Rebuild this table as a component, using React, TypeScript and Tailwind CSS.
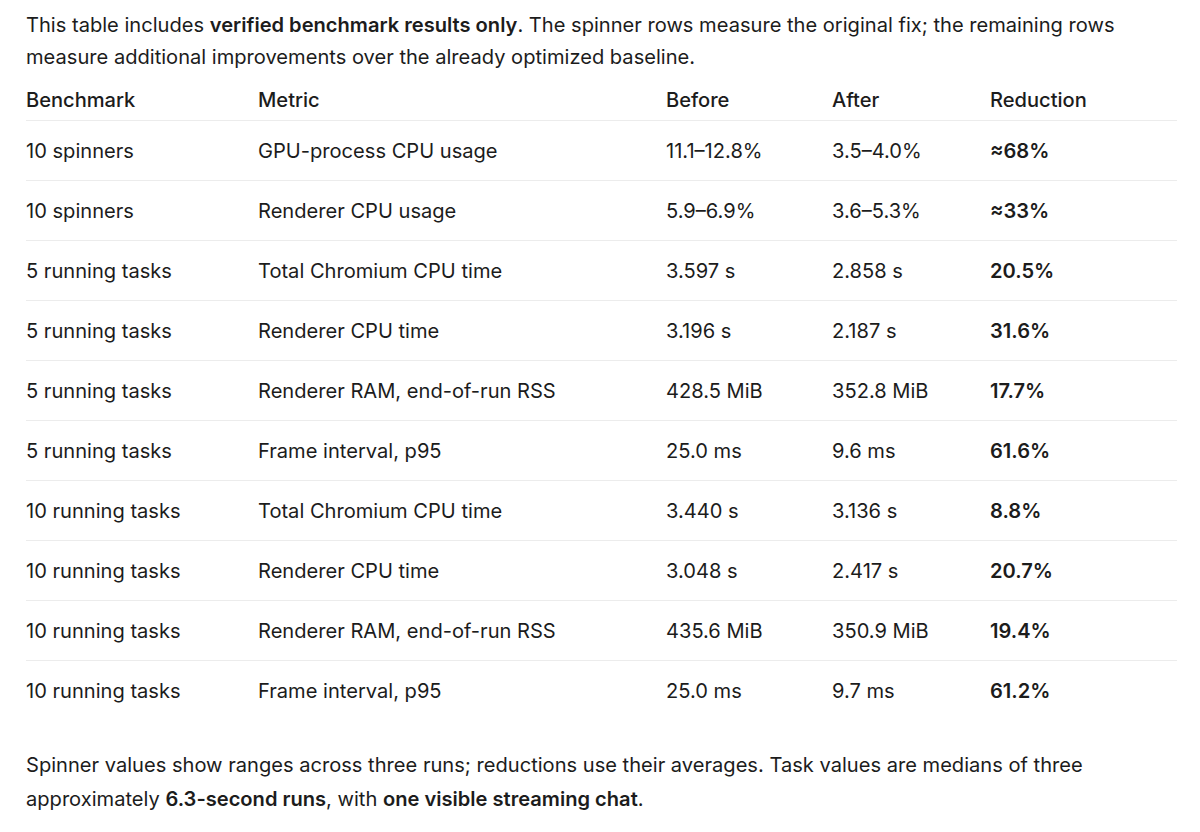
import React from 'react';

const rows = [
  ['10 spinners', 'GPU-process CPU usage', '11.1–12.8%', '3.5–4.0%', '≈68%'],
  ['10 spinners', 'Renderer CPU usage', '5.9–6.9%', '3.6–5.3%', '≈33%'],
  ['5 running tasks', 'Total Chromium CPU time', '3.597 s', '2.858 s', '20.5%'],
  ['5 running tasks', 'Renderer CPU time', '3.196 s', '2.187 s', '31.6%'],
  ['5 running tasks', 'Renderer RAM, end-of-run RSS', '428.5 MiB', '352.8 MiB', '17.7%'],
  ['5 running tasks', 'Frame interval, p95', '25.0 ms', '9.6 ms', '61.6%'],
  ['10 running tasks', 'Total Chromium CPU time', '3.440 s', '3.136 s', '8.8%'],
  ['10 running tasks', 'Renderer CPU time', '3.048 s', '2.417 s', '20.7%'],
  ['10 running tasks', 'Renderer RAM, end-of-run RSS', '435.6 MiB', '350.9 MiB', '19.4%'],
  ['10 running tasks', 'Frame interval, p95', '25.0 ms', '9.7 ms', '61.2%'],
];

const cols = 'grid grid-cols-[232px_408px_166px_158px_1fr]';

export default function App() {
  return (
    <div className="w-[1200px] h-[832px] bg-white text-[#1c1c1c] font-['Inter',sans-serif] text-[20.1px] overflow-hidden">
      <div className="pl-[26px] pr-[23px] pt-[9px]">
        <p className="leading-[32px]">
          This table includes <span className="font-semibold">verified benchmark results only</span>. The spinner rows
          measure the original fix; the remaining rows measure additional improvements over the already optimized baseline.
        </p>

        <div className="mt-[7px]">
          <div className={`${cols} h-[41px] items-center border-b border-[#ececec] font-medium`}>
            <div>Benchmark</div>
            <div>Metric</div>
            <div>Before</div>
            <div>After</div>
            <div>Reduction</div>
          </div>
          {rows.map((r, i) => (
            <div
              key={i}
              className={`${cols} h-[60px] pt-px items-center ${i < rows.length - 1 ? 'border-b border-[#ececec]' : ''}`}
            >
              <div>{r[0]}</div>
              <div>{r[1]}</div>
              <div>{r[2]}</div>
              <div>{r[3]}</div>
              <div className="font-semibold">{r[4]}</div>
            </div>
          ))}
        </div>

        <p className="leading-[34px] mt-[27px]">
          Spinner values show ranges across three runs; reductions use their averages. Task values are medians of three
          approximately <span className="font-semibold">6.3-second runs</span>, with{' '}
          <span className="font-semibold">one visible streaming chat</span>.
        </p>
      </div>
    </div>
  );
}
